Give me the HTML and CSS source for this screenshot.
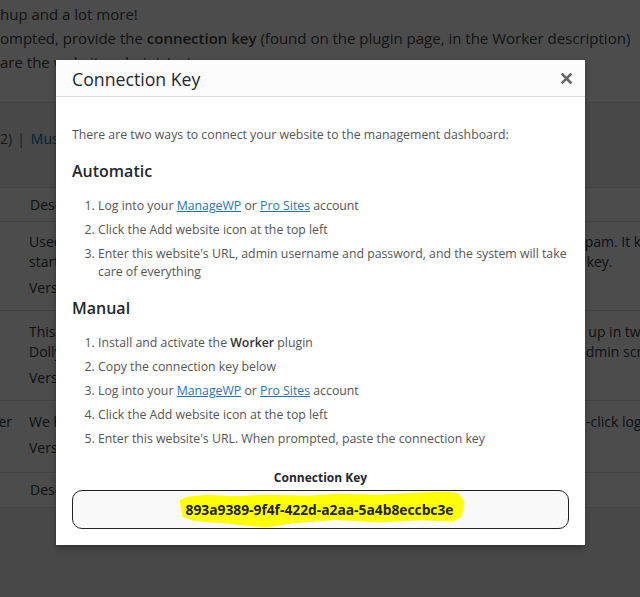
FILE: index.html
```
<!DOCTYPE html>
<html>
<head>
<meta charset="utf-8">
<title>Connection Key</title>
<link rel="stylesheet" href="styles.css">
</head>
<body>
<div class="page">
  <div class="notice">
    <p>hup and a lot more!</p>
    <p>ompted, provide the <b>connection key</b> (found on the plugin page, in the Worker description)</p>
    <p>are the website administrator.</p>
  </div>
  <div class="subsub">2)<span class="sep">|</span><a href="#">Must-Use (1)</a></div>
  <div class="table">
    <div class="row head"><span class="c1"></span><span class="c2">Description</span><span class="gap"></span><span class="c3"></span></div>
    <div class="row r1">
      <span class="c1"></span>
      <span class="c2"><span class="ln">Used by</span><span class="ln">started</span><span class="ln ver">Version</span></span>
      <span class="gap"></span>
      <span class="c3"><span class="ln">spam. It keeps your site</span><span class="ln">t key.</span></span>
    </div>
    <div class="row r2">
      <span class="c1"></span>
      <span class="c2"><span class="ln">This is</span><span class="ln">Dolly.</span><span class="ln ver">Version</span></span>
      <span class="gap"></span>
      <span class="c3"><span class="ln">s up in two words</span><span class="ln">admin screen</span></span>
    </div>
    <div class="row r3">
      <span class="c1">Worker</span>
      <span class="c2"><span class="ln">We help</span><span class="ln ver">Version</span></span>
      <span class="gap"></span>
      <span class="c3"><span class="ln">1-click login</span></span>
    </div>
    <div class="row foot"><span class="c1"></span><span class="c2">Description</span><span class="gap"></span><span class="c3"></span></div>
  </div>
</div>
<div class="overlay"></div>
<div class="modal">
  <div class="modal-head">
    <span class="modal-title">Connection Key</span>
    <svg class="close" width="11" height="11" viewBox="0 0 11 11"><path d="M1.5 1.5 L9.5 9.5 M9.5 1.5 L1.5 9.5" stroke="#666" stroke-width="2.6" stroke-linecap="square"/></svg>
  </div>
  <div class="modal-body">
    <p class="intro">There are two ways to connect your website to the management dashboard:</p>
    <h3>Automatic</h3>
    <ol>
      <li>Log into your <a href="#">ManageWP</a> or <a href="#">Pro Sites</a> account</li>
      <li>Click the Add website icon at the top left</li>
      <li>Enter this website's URL, admin username and password, and the system will take care of everything</li>
    </ol>
    <h3>Manual</h3>
    <ol>
      <li>Install and activate the <b>Worker</b> plugin</li>
      <li>Copy the connection key below</li>
      <li>Log into your <a href="#">ManageWP</a> or <a href="#">Pro Sites</a> account</li>
      <li>Click the Add website icon at the top left</li>
      <li>Enter this website's URL. When prompted, paste the connection key</li>
    </ol>
    <div class="key-label">Connection Key</div>
    <div class="key-box"><span class="key">893a9389-9f4f-422d-a2aa-5a4b8eccbc3e</span></div>
  </div>
</div>
</body>
</html>
```
FILE: styles.css
```
html, body {
  margin: 0;
  padding: 0;
}
body {
  width: 640px;
  height: 597px;
  overflow: hidden;
  background: #f1f1f1;
  font-family: "Open Sans", sans-serif;
  color: #444;
  position: relative;
}
.page {
  width: 640px;
}
.notice {
  background: #fff;
  height: 103px;
  box-sizing: border-box;
  padding-top: 2px;
  border-bottom: 1px solid #e1e1e1;
  font-size: 15px;
  line-height: 24px;
  color: #444;
}
.notice p {
  margin: 0;
  white-space: nowrap;
}
.notice b {
  font-weight: 600;
}
.subsub {
  height: 84px;
  box-sizing: border-box;
  padding-top: 24px;
  font-size: 14px;
  line-height: 24px;
  color: #555;
  white-space: nowrap;
}
.subsub .sep {
  margin: 0 6px 0 5px;
  color: #666;
}
.subsub a {
  color: #0073aa;
  text-decoration: none;
}
.table {
  background: #fff;
  border-top: 1px solid #e1e1e1;
  border-bottom: 1px solid #e1e1e1;
}
.row {
  display: grid;
  grid-template-columns: 29px 27px 522px 62px;
  font-size: 14px;
  line-height: 20px;
  color: #32373c;
  border-bottom: 1px solid #e1e1e1;
  box-sizing: border-box;
}
.row:last-child {
  border-bottom: 0;
}
.row span {
  white-space: nowrap;
  overflow: hidden;
}
.row .ln {
  display: block;
}
.row .ver {
  margin-top: 6px;
}
.head, .foot {
  height: 34px;
  align-items: center;
  color: #32373c;
}
.head .c2, .foot .c2 {
  padding-left: 1px;
}
.r1 { height: 89px; padding-top: 10px; }
.r2 { height: 90px; padding-top: 11px; }
.r3 { height: 72px; padding-top: 11px; }
.r3 .c1 {
  text-indent: -36px;
  overflow: visible;
}
.overlay {
  position: absolute;
  inset: 0;
  background: rgba(0, 0, 0, 0.7);
}
.modal {
  position: absolute;
  left: 56px;
  top: 60px;
  width: 529px;
  height: 485px;
  background: #fff;
  box-shadow: 0 3px 6px rgba(0, 0, 0, 0.3);
  font-family: "Open Sans", sans-serif;
}
.modal-head {
  height: 36px;
  background: #fcfcfc;
  border-bottom: 1px solid #ddd;
  display: flex;
  align-items: center;
  justify-content: space-between;
  padding: 0 13px 0 16px;
}
.modal-title {
  font-size: 17.7px;
  color: #23282d;
  margin-top: 1px;
}
.close {
  display: block;
}
.modal-body {
  padding: 29px 16px 0 16px;
  font-size: 12.3px;
  line-height: 18px;
  color: #555;
}
.intro {
  margin: 0;
}
h3 {
  margin: 16px 0 0;
  font-size: 16px;
  line-height: 22px;
  font-weight: 600;
  color: #23282d;
}
ol {
  margin: 15px 0 0;
  padding-left: 26px;
}
li {
  margin-bottom: 6px;
}
li:last-child {
  margin-bottom: 0;
}
li b {
  font-weight: 600;
  color: #333;
}
a {
  color: #2a73b0;
}
.key-label {
  margin-top: 21px;
  text-align: center;
  font-size: 12px;
  font-weight: 700;
  color: #23282d;
  line-height: 18px;
}
.key-box {
  margin-top: 3px;
  height: 39px;
  box-sizing: border-box;
  border: 1px solid #222;
  border-radius: 10px;
  background: #f9f9f9;
  display: flex;
  align-items: center;
  justify-content: center;
}
.key {
  display: inline-block;
  background: #ffff00;
  font-size: 13.8px;
  line-height: 18px;
  font-weight: 700;
  color: #222;
  padding: 9px 11px 9px 6px;
  margin-left: 3px;
  clip-path: polygon(0% 25%, 3% 14%, 10% 10%, 20% 13%, 30% 9%, 45% 12%, 55% 6%, 70% 9%, 85% 3%, 94% 0%, 98% 6%, 100% 30%, 99% 70%, 96% 84%, 85% 80%, 70% 86%, 55% 79%, 40% 88%, 30% 100%, 24% 95%, 15% 88%, 5% 82%, 1% 70%);
}
```
